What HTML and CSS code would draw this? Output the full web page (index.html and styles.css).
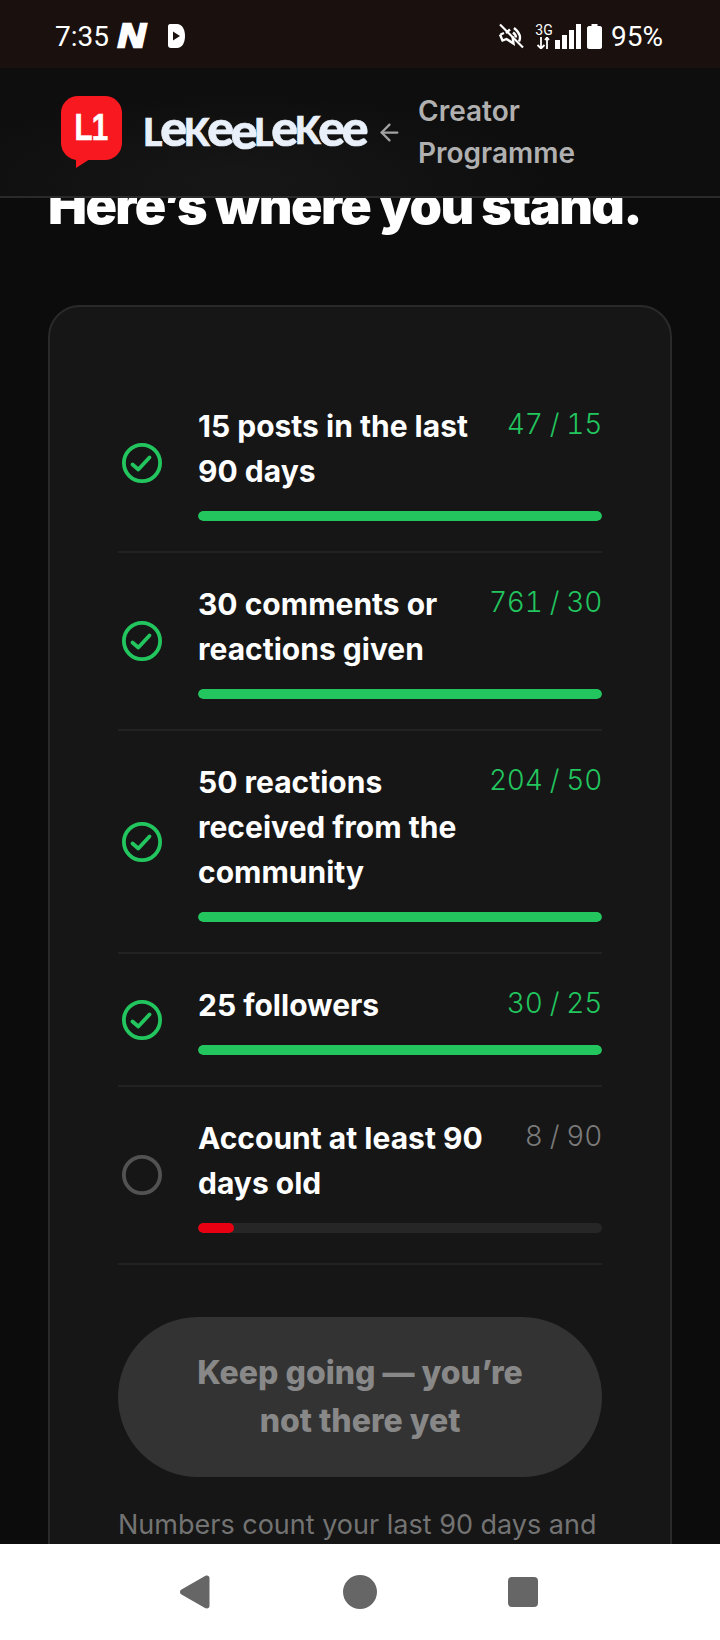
FILE: index.html
```html
<!DOCTYPE html>
<html lang="en">
<head>
<meta charset="utf-8">
<title>Creator Programme</title>
<link rel="stylesheet" href="styles.css">
</head>
<body>
<div class="screen">
  <div class="statusbar">
    <div class="status-left">
      <span class="clock">7:35</span>
      <span class="n-icon">N</span>
      <svg class="d-icon" viewBox="0 0 18 26"><path d="M3 1h7c5 0 8 5 8 12s-3 12-8 12H4c-2 0-3-1-3-3V3c0-1 1-2 2-2z" fill="#fff"/><path d="M6 8.500l7 4.500-7 4.500z" fill="#1a100e"/></svg>
    </div>
    <div class="status-right">
      <svg class="mute" viewBox="0 0 26 26" fill="none" stroke="#fff" stroke-width="2.400"><path d="M2 11.500l2.500 6 4-1.500 7 4.500-1-7M12 6.500 8 10" /><path d="M2.500 11.500 6 10"/><path d="M16 5c3 2.500 6 6 6 9.500 0 1.500-.5 3-1 4M15 9.500c2 1.500 3 3.500 3 5"/><path d="M2 1.500l23 23" stroke-width="2.200"/></svg>
      <div class="net">
        <span class="net-label">3G</span>
        <svg class="net-arrows" viewBox="0 0 16 12" fill="none" stroke="#fff" stroke-width="1.800"><path d="M5 0v11M1.500 8 5 11.500 8.500 8"/><path d="M11 12V1M9 3l2-2.500L13 3"/></svg>
      </div>
      <div class="bars">
        <span class="bar-s1"></span><span class="bar-s2"></span><span class="bar-s3"></span><span class="bar-s4"></span>
      </div>
      <svg class="battery" viewBox="0 0 15 25"><path d="M4.500 0h6v2H13c1 0 2 1 2 2v19c0 1-1 2-2 2H2c-1 0-2-1-2-2V4c0-1 1-2 2-2h2.500z" fill="#fff"/></svg>
      <span class="pct">95%</span>
    </div>
  </div>

  <header class="topbar">
    <div class="logo-mark">
      <span class="logo-l1">L1</span>
    </div>
    <span class="wordmark"><span class="cap">L</span>e<span class="cap">K</span>e<span class="dip">e</span><span class="cap">L</span>e<span class="cap rise">K</span>ee</span>
    <svg class="back" viewBox="0 0 24 24" fill="none" stroke="#a3a3a3" stroke-width="2" stroke-linecap="round" stroke-linejoin="round"><path d="m12 19-7-7 7-7"/><path d="M19 12H5"/></svg>
    <span class="crumb">Creator Programme</span>
  </header>

  <main class="content">
    <h1 class="title">Here’s where you stand.</h1>
    <section class="card">
      <div class="row">
        <svg class="ok" viewBox="-4 -4 48 48" fill="none" stroke="#22c55e" stroke-width="3.800" stroke-linecap="round" stroke-linejoin="round"><circle cx="20" cy="20" r="18.100"/><path d="M10.500 21.500l5.800 5 11.200-12"/></svg>
        <div class="row-body">
          <div class="row-head"><span class="name">15 posts in the last 90 days</span><span class="val val-ok">47 / 15</span></div>
          <div class="track"><div class="fill"></div></div>
        </div>
      </div>
      <div class="row">
        <svg class="ok" viewBox="-4 -4 48 48" fill="none" stroke="#22c55e" stroke-width="3.800" stroke-linecap="round" stroke-linejoin="round"><circle cx="20" cy="20" r="18.100"/><path d="M10.500 21.500l5.800 5 11.200-12"/></svg>
        <div class="row-body">
          <div class="row-head"><span class="name">30 comments or reactions given</span><span class="val val-ok">761 / 30</span></div>
          <div class="track"><div class="fill"></div></div>
        </div>
      </div>
      <div class="row">
        <svg class="ok" viewBox="-4 -4 48 48" fill="none" stroke="#22c55e" stroke-width="3.800" stroke-linecap="round" stroke-linejoin="round"><circle cx="20" cy="20" r="18.100"/><path d="M10.500 21.500l5.800 5 11.200-12"/></svg>
        <div class="row-body">
          <div class="row-head"><span class="name">50 reactions received from the community</span><span class="val val-ok">204 / 50</span></div>
          <div class="track"><div class="fill"></div></div>
        </div>
      </div>
      <div class="row">
        <svg class="ok" viewBox="-4 -4 48 48" fill="none" stroke="#22c55e" stroke-width="3.800" stroke-linecap="round" stroke-linejoin="round"><circle cx="20" cy="20" r="18.100"/><path d="M10.500 21.500l5.800 5 11.200-12"/></svg>
        <div class="row-body">
          <div class="row-head"><span class="name">25 followers</span><span class="val val-ok">30 / 25</span></div>
          <div class="track"><div class="fill"></div></div>
        </div>
      </div>
      <div class="row">
        <svg class="ok" viewBox="-4 -4 48 48" fill="none" stroke="#525252" stroke-width="3.800"><circle cx="20" cy="20" r="18.100"/></svg>
        <div class="row-body">
          <div class="row-head"><span class="name">Account at least 90 days old</span><span class="val">8 / 90</span></div>
          <div class="track"><div class="fill fill-red" style="width:8.9%"></div></div>
        </div>
      </div>
      <button class="cta" type="button">Keep going — you’re not there yet</button>
      <p class="note">Numbers count your last 90 days and</p>
    </section>
  </main>

  <nav class="navbar">
    <svg class="nav-back" viewBox="0 0 30 34"><path d="M1.500 14.500 25 .9c2.500-1.200 4.500 0 4.500 2.500v27.200c0 2.500-2 3.700-4.500 2.500L1.500 19.500c-2-1.200-2-3.800 0-5z" fill="#666"/></svg>
    <span class="nav-home"></span>
    <span class="nav-recent"></span>
  </nav>
</div>
</body>
</html>
```

FILE: styles.css
```css
* { box-sizing: border-box; }
html, body { margin: 0; padding: 0; background: #0c0c0c; }
.screen {
  width: 720px;
  height: 1640px;
  display: flex;
  flex-direction: column;
  overflow: hidden;
  font-family: Inter, "Liberation Sans", sans-serif;
}

.statusbar {
  height: 68px;
  flex: none;
  background: #1a100e;
  color: #fff;
  display: flex;
  justify-content: space-between;
  align-items: center;
  padding: 4px 57px 0 55px;
  font-family: Roboto, "Liberation Sans", sans-serif;
  font-size: 28px;
}
.status-left, .status-right { display: flex; align-items: center; }
.clock { width: 63px; }
.n-icon {
  width: 30px;
  font-family: "Liberation Sans", sans-serif;
  font-weight: 700;
  font-style: italic;
  font-size: 33px;
  line-height: 26px;
  transform: scaleX(1.15);
  transform-origin: left center;
  -webkit-text-stroke: 2.500px #fff;
}
.d-icon { width: 18px; height: 26px; margin-left: 19px; }
.mute { width: 26px; height: 26px; }
.net { width: 18px; margin-left: 11px; display: flex; flex-direction: column; align-items: center; }
.net-label { font-size: 14px; line-height: 12px; font-family: Roboto, sans-serif; }
.net-arrows { width: 16px; height: 12px; margin-top: 1px; }
.bars { display: flex; align-items: flex-end; gap: 2px; height: 25px; margin-left: 2px; }
.bars span { display: block; width: 5px; background: #fff; }
.bar-s1 { height: 9px; }
.bar-s2 { height: 14px; }
.bar-s3 { height: 19px; }
.bar-s4 { height: 25px; }
.battery { width: 15px; height: 25px; margin-left: 6px; }
.pct { margin-left: 9px; }

.topbar {
  height: 130px;
  flex: none;
  display: flex;
  align-items: center;
  padding-left: 61px;
  background: radial-gradient(ellipse 320px 90px at 240px 115px, #171717 0%, #0e0e0e 100%);
  border-bottom: 2px solid #2a2a2a;
}
.logo-mark {
  position: relative;
  width: 61px;
  height: 64px;
  margin-top: -8px;
  background: #f7191f;
  border-radius: 17px;
  display: flex;
  align-items: center;
  justify-content: center;
  flex: none;
}
.logo-mark::after {
  content: "";
  position: absolute;
  left: 15px;
  top: 63px;
  border-left: 0 solid transparent;
  border-top: 9px solid #f7191f;
  border-right: 14px solid transparent;
}
.logo-l1 {
  color: #fff;
  font-family: "Liberation Sans", sans-serif;
  font-weight: 700;
  font-size: 36px;
  letter-spacing: -1px;
  line-height: 1;
  transform: scaleX(.82);
  -webkit-text-stroke: .6px #fff;
}
.wordmark {
  width: 223px;
  margin: -6px 0 0 21px;
  flex: none;
  font-family: Lato, sans-serif;
  font-weight: 900;
  font-size: 50px;
  line-height: 50px;
  letter-spacing: -3.500px;
  color: #e9f0f9;
  white-space: nowrap;
  -webkit-text-stroke: .7px #e9f0f9;
}
.cap { font-size: 37px; letter-spacing: -2px; }
.dip { display: inline-block; transform: translateY(3px); }
.rise { display: inline-block; transform: translateY(-2px); }
.back { width: 27px; height: 27px; margin-left: 10px; flex: none; }
.crumb {
  width: 170px;
  margin: 0 0 0 15px;
  font-size: 28px;
  font-weight: 600;
  line-height: 42px;
  color: #b0b0b0;
}

.content {
  flex: 1;
  min-height: 0;
  overflow: hidden;
  padding: 0 48px;
}
.title {
  margin: -21px 0 0;
  color: #fff;
  font-size: 52px;
  font-weight: 900;
  line-height: 58px;
  letter-spacing: -1.600px;
  white-space: nowrap;
}
.card {
  margin-top: 70px;
  padding: 68px 68px 40px;
  background: #161616;
  border: 2px solid #2a2a2a;
  border-radius: 32px;
}
.row {
  display: flex;
  align-items: center;
  gap: 32px;
  padding: 30px 0;
  border-bottom: 2px solid #222;
}
.ok { width: 48px; height: 48px; flex: none; }
.row-body { flex: 1; min-width: 0; }
.row-head { display: flex; justify-content: space-between; gap: 24px; align-items: flex-start; margin-bottom: 16px; }
.name { color: #fff; font-size: 30px; font-weight: 700; line-height: 45px; margin: -1px 0 1px; }
.val {
  flex: none;
  font-size: 28px;
  font-weight: 300;
  font-variant-numeric: tabular-nums;
  letter-spacing: -.3px;
  line-height: 38px;
  color: #7a7a7a;
  white-space: nowrap;
}
.val-ok { color: #22c55e; }
.track { height: 10px; border-radius: 5px; background: #262626; overflow: hidden; }
.fill { height: 100%; width: 100%; background: #22c55e; border-radius: 5px; }
.fill-red { background: #e60012; }
.cta {
  display: block;
  width: 100%;
  margin-top: 52px;
  padding: 32px 60px;
  border: 0;
  border-radius: 80px;
  background: #333;
  color: #888;
  font-family: inherit;
  font-size: 32px;
  font-weight: 800;
  line-height: 48px;
}
.note {
  margin: 26px 0 0;
  color: #737373;
  font-size: 27px;
  line-height: 44px;
}

.navbar {
  height: 96px;
  flex: none;
  background: #fff;
  display: flex;
  align-items: center;
  padding: 0 0 0 180px;
}
.nav-back { width: 30px; height: 34px; }
.nav-home { width: 34px; height: 34px; margin-left: 133px; border-radius: 50%; background: #666; }
.nav-recent { width: 30px; height: 30px; margin-left: 131px; border-radius: 4px; background: #666; }
```
